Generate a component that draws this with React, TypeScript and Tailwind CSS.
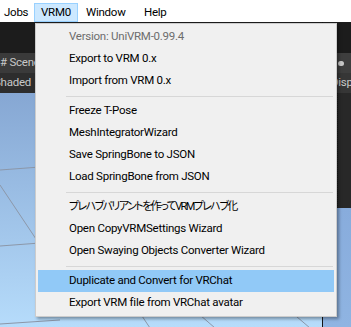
import React from "react";

type Entry = { label: string; kind?: "item" | "sep" | "disabled" | "active" | "ja" };

const entries: Entry[] = [
  { label: "Version: UniVRM-0.99.4", kind: "disabled" },
  { label: "Export to VRM 0.x" },
  { label: "Import from VRM 0.x" },
  { label: "", kind: "sep" },
  { label: "Freeze T-Pose" },
  { label: "MeshIntegratorWizard" },
  { label: "Save SpringBone to JSON" },
  { label: "Load SpringBone from JSON" },
  { label: "", kind: "sep" },
  { label: "プレハブバリアントを作ってVRMプレハブ化", kind: "ja" },
  { label: "Open CopyVRMSettings Wizard" },
  { label: "Open Swaying Objects Converter Wizard" },
  { label: "", kind: "sep" },
  { label: "Duplicate and Convert for VRChat", kind: "active" },
  { label: "Export VRM file from VRChat avatar" },
];

function SceneLines() {
  return (
    <svg className="absolute inset-0" width="323" height="235" viewBox="0 0 323 235">
      <g stroke="#8c97a8" strokeWidth="1" fill="none">
        <line x1="0" y1="77" x2="40" y2="74" />
        <line x1="0" y1="92" x2="36" y2="146" />
        <line x1="0" y1="153" x2="40" y2="150" />
        <line x1="0" y1="231" x2="60" y2="227" />
        <line x1="200" y1="222" x2="215" y2="235" />
        <line x1="140" y1="220" x2="150" y2="235" />
        <line x1="290" y1="218" x2="310" y2="235" />
      </g>
    </svg>
  );
}

export default function App() {
  return (
    <div
      className="relative w-[351px] h-[327px] overflow-hidden bg-[#1e1e1e] text-[11.5px] tracking-[-0.25px]"
      style={{ fontFamily: 'Roboto, "Noto Sans CJK JP", sans-serif' }}
    >
      {/* menu bar */}
      <div className="h-[22px] bg-white flex items-end text-black">
        <div className="h-[19px] w-[34px] pl-[4px] flex items-center">Jobs</div>
        <div className="h-[19px] w-[44px] flex items-center justify-center bg-[#cce8ff] border border-[#99d1ff]">
          VRM0
        </div>
        <div className="h-[19px] w-[66px] pl-[8px] flex items-center">Window</div>
        <div className="h-[19px] flex items-center">Help</div>
      </div>

      {/* editor behind */}
      <div className="flex h-[305px]">
        <div className="w-[322px] shrink-0 flex flex-col">
          <div className="h-[31px] bg-[#1c1c1c]" />
          <div className="h-[20px] bg-[#3a3a3a] text-[#c8c8c8] flex items-center whitespace-nowrap">
            # Scene
          </div>
          <div className="h-[20px] bg-[#2d2d2d] text-[#c8c8c8] flex items-center whitespace-nowrap overflow-hidden">
            <span className="-ml-[6px]">Shaded</span>
          </div>
          <div className="relative flex-1 bg-gradient-to-b from-[#86a7d3] to-[#b6dcfb]">
            <SceneLines />
          </div>
        </div>
        <div className="w-[1px] shrink-0 bg-[#141414]" />
        <div className="flex-1 min-w-0 flex flex-col overflow-hidden">
          <div className="h-[31px] bg-[#1c1c1c]" />
          <div className="h-[20px] bg-[#3e3e3e] text-[#c8c8c8] flex items-center pl-[15px] whitespace-nowrap">
            <span className="w-[6px] h-[5px] rounded-full bg-[#c8c8c8]" />
          </div>
          <div className="h-[20px] bg-[#363636] text-[#c8c8c8] flex items-center pl-[8px] whitespace-nowrap">
            Display
          </div>
          <div className="h-[115px] bg-[#282828] border-l border-dotted border-[#1a1a1a] ml-[14px]" />
          <div className="flex-1 bg-gradient-to-b from-[#88acdc] to-[#8fb4e2]" />
        </div>
      </div>

      {/* dropdown */}
      <div className="absolute left-[35px] top-[23px] w-[302px] bg-[#f0f0f0] border border-[#cccccc] py-[2px] shadow-[2px_2px_3px_rgba(0,0,0,0.35)]">
        {entries.map((e, i) =>
          e.kind === "sep" ? (
            <div key={i} className="h-[8px] flex items-center pl-[30px] pr-[3px]">
              <div className="h-px w-full bg-[#d7d7d7]" />
            </div>
          ) : (
            <div
              key={i}
              className={
                "h-[22px] mx-[2px] flex items-center pl-[31px] whitespace-nowrap " +
                (e.kind === "disabled"
                  ? "text-[#6d6d6d]"
                  : e.kind === "active"
                  ? "bg-[#91c9f7] text-black"
                  : e.kind === "ja"
                  ? "text-black text-[11px] tracking-[-1.6px] [font-feature-settings:'palt']"
                  : "text-black")
              }
            >
              {e.label}
            </div>
          )
        )}
      </div>
    </div>
  );
}
